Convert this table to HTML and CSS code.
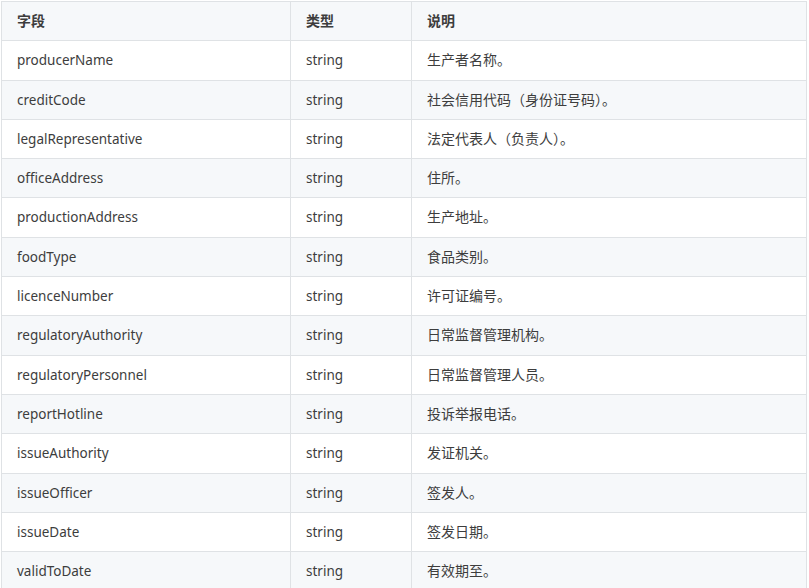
FILE: index.html
```html
<!DOCTYPE html>
<html lang="zh-CN">
<head>
<meta charset="utf-8">
<link rel="stylesheet" href="styles.css">
</head>
<body>
<div class="wrap">
<table class="doc">
<colgroup><col class="c1"><col class="c2"><col class="c3"></colgroup>
<thead>
<tr><th>字段</th><th>类型</th><th>说明</th></tr>
</thead>
<tbody>
<tr><td class="lat">producerName</td><td class="lat">string</td><td>生产者名称。</td></tr>
<tr><td class="lat">creditCode</td><td class="lat">string</td><td>社会信用代码（身份证号码）。</td></tr>
<tr><td class="lat">legalRepresentative</td><td class="lat">string</td><td>法定代表人（负责人）。</td></tr>
<tr><td class="lat">officeAddress</td><td class="lat">string</td><td>住所。</td></tr>
<tr><td class="lat">productionAddress</td><td class="lat">string</td><td>生产地址。</td></tr>
<tr><td class="lat">foodType</td><td class="lat">string</td><td>食品类别。</td></tr>
<tr><td class="lat">licenceNumber</td><td class="lat">string</td><td>许可证编号。</td></tr>
<tr><td class="lat">regulatoryAuthority</td><td class="lat">string</td><td>日常监督管理机构。</td></tr>
<tr><td class="lat">regulatoryPersonnel</td><td class="lat">string</td><td>日常监督管理人员。</td></tr>
<tr><td class="lat">reportHotline</td><td class="lat">string</td><td>投诉举报电话。</td></tr>
<tr><td class="lat">issueAuthority</td><td class="lat">string</td><td>发证机关。</td></tr>
<tr><td class="lat">issueOfficer</td><td class="lat">string</td><td>签发人。</td></tr>
<tr><td class="lat">issueDate</td><td class="lat">string</td><td>签发日期。</td></tr>
<tr><td class="lat">validToDate</td><td class="lat">string</td><td>有效期至。</td></tr>
</tbody>
</table>
</div>
</body>
</html>
```
FILE: styles.css
```css
html, body {
  margin: 0;
  padding: 0;
  background: #ffffff;
}
.wrap {
  padding: 1px 0 0 1px;
}
.doc {
  border-collapse: collapse;
  table-layout: fixed;
  width: 805px;
  font-family: "Noto Sans", "Noto Sans CJK SC", sans-serif;
  font-size: 14px;
  color: #3d3d3d;
}
.c1 { width: 289px; }
.c2 { width: 121px; }
.c3 { width: 395px; }
.doc th, .doc td {
  border: 1px solid #dfe2e5;
  padding: 10px 15px;
  line-height: 18.3px;
  text-align: left;
  white-space: nowrap;
}
.doc td.lat {
  font-size: 13.5px;
}
.doc th {
  font-weight: bold;
  background: #f6f8fa;
}
.doc tbody tr:nth-child(2n) {
  background: #f6f8fa;
}
```
